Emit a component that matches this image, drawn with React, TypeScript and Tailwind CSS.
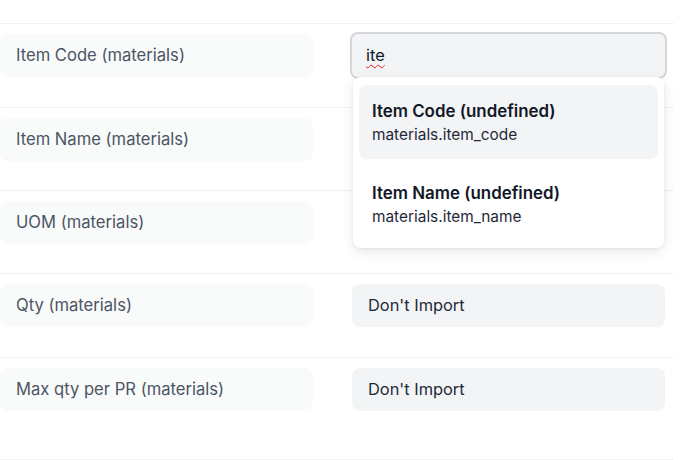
import React from "react";

type Row = {
  label: string;
  value: string;
  height: string;
};

const ROWS: Row[] = [
  { label: "Item Code (materials)", value: "ite", height: "h-[84px]" },
  { label: "Item Name (materials)", value: "", height: "h-[83px]" },
  { label: "UOM (materials)", value: "", height: "h-[83px]" },
  { label: "Qty (materials)", value: "Don't Import", height: "h-[84px]" },
  { label: "Max qty per PR (materials)", value: "Don't Import", height: "h-[102px]" },
];

const OPTIONS = [
  { title: "Item Code (undefined)", field: "materials.item_code", active: true },
  { title: "Item Name (undefined)", field: "materials.item_name", active: false },
];

function Dropdown() {
  return (
    <div className="absolute left-[1px] top-[43px] z-10 w-[311px] rounded-lg bg-white px-[6px] pt-[8px] pb-[7px] shadow-[0_4px_14px_rgba(0,0,0,0.09),0_1px_3px_rgba(0,0,0,0.06)]">
      <div className="flex flex-col gap-2">
        {OPTIONS.map((opt) => (
          <div
            key={opt.field}
            className={`flex h-[74px] flex-col justify-center rounded-lg px-[13px] ${opt.active ? "bg-[#f3f4f6]" : ""}`}
          >
            <div className="text-[16.9px] font-semibold leading-[22px] text-[#111827]">{opt.title}</div>
            <div className="mt-[3px] text-[15.4px] leading-[20px] text-[#1f2937]">{opt.field}</div>
          </div>
        ))}
      </div>
    </div>
  );
}

export default function App() {
  return (
    <div className="h-[460px] w-[690px] overflow-hidden bg-white font-['Inter',sans-serif]">
      <div className="h-[23px]" />
      <div className="w-[674px]">
        {ROWS.map((row, i) => (
          <div key={row.label} className={`flex border-t border-[#f0f1f2] pt-[10px] ${row.height}`}>
            <div className="flex h-[43px] w-[313px] items-center rounded-lg bg-[#f9fafa] px-4 text-[16.6px] text-[#4b5563]">
              {row.label}
            </div>
            <div className="relative ml-[39px] w-[313px]">
              {i === 0 ? (
                <>
                  <div className="-mx-[2px] -my-[2px] flex h-[47px] items-center rounded-lg border-2 border-[#d4d6d9] bg-[#f3f4f6] px-[14px] text-[16.4px] text-[#111827]">
                    <span className="underline decoration-wavy decoration-[#e11d1d] decoration-1 underline-offset-[3px]">
                      {row.value}
                    </span>
                  </div>
                  <Dropdown />
                </>
              ) : row.value ? (
                <div className="flex h-[43px] items-center rounded-lg bg-[#f3f4f6] px-4 text-[16.4px] text-[#1f2937]">
                  {row.value}
                </div>
              ) : null}
            </div>
          </div>
        ))}
        <div className="border-t border-[#f0f1f2]" />
      </div>
    </div>
  );
}
